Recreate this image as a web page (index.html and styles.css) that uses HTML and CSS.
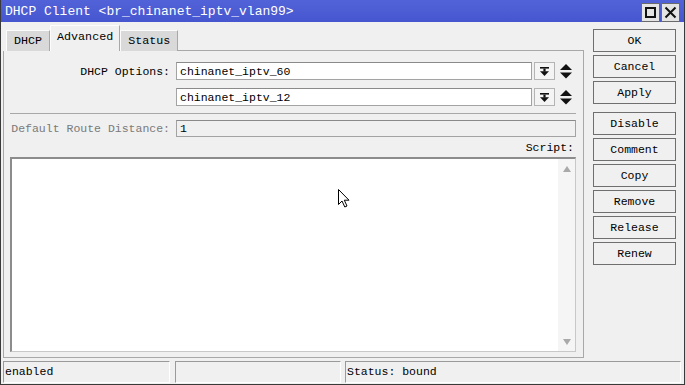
FILE: index.html
```html
<!DOCTYPE html>
<html>
<head>
    <title>DHCP Client</title>
    <link rel="stylesheet" href="styles.css">
</head>
<body>
    <div class="window">
        <div class="titlebar">
            <span class="title">DHCP Client &lt;br_chinanet_iptv_vlan99&gt;</span>
            <div class="win-buttons">
                <span class="wbtn"><span class="max-box"></span></span>
                <span class="wbtn">
                    <svg width="13" height="13" viewBox="0 0 13 13"><path d="M1.5 1.5 L11.5 11.5 M11.5 1.5 L1.5 11.5" stroke="#111" stroke-width="2"/></svg>
                </span>
            </div>
        </div>

        <div class="main">
            <div class="left-col">
                <div class="tabs">
                    <div class="tab">DHCP</div>
                    <div class="tab active">Advanced</div>
                    <div class="tab">Status</div>
                    <div class="tab-fill"></div>
                </div>
                <div class="panel">
                    <div class="row first">
                        <label class="field-label">DHCP Options:</label>
                        <div class="field">
                            <div class="input">chinanet_iptv_60</div>
                            <span class="drop-btn">
                                <svg width="9" height="9" viewBox="0 0 9 9"><rect x="0" y="0" width="9" height="1.6" fill="#111"/><rect x="3.4" y="1.6" width="2.2" height="3" fill="#111"/><polygon points="0,4.3 9,4.3 4.5,9" fill="#111"/></svg>
                            </span>
                            <span class="updown">
                                <svg width="12" height="15" viewBox="0 0 12 15"><polygon points="6,0 12,6 0,6" fill="#111"/><polygon points="0,8.5 12,8.5 6,14.5" fill="#111"/></svg>
                            </span>
                        </div>
                    </div>
                    <div class="row">
                        <label class="field-label"></label>
                        <div class="field">
                            <div class="input">chinanet_iptv_12</div>
                            <span class="drop-btn">
                                <svg width="9" height="9" viewBox="0 0 9 9"><rect x="0" y="0" width="9" height="1.6" fill="#111"/><rect x="3.4" y="1.6" width="2.2" height="3" fill="#111"/><polygon points="0,4.3 9,4.3 4.5,9" fill="#111"/></svg>
                            </span>
                            <span class="updown">
                                <svg width="12" height="15" viewBox="0 0 12 15"><polygon points="6,0 12,6 0,6" fill="#111"/><polygon points="0,8.5 12,8.5 6,14.5" fill="#111"/></svg>
                            </span>
                        </div>
                    </div>

                    <div class="separator"></div>

                    <div class="row disabled">
                        <label class="field-label">Default Route Distance:</label>
                        <div class="field">
                            <div class="input">1</div>
                        </div>
                    </div>

                    <div class="script-label">Script:</div>
                    <div class="script-box">
                        <div class="script-text"></div>
                        <div class="scrollbar">
                            <span class="arrow-up"></span>
                            <span class="arrow-down"></span>
                        </div>
                    </div>
                </div>
            </div>

            <div class="buttons">
                <button class="btn">OK</button>
                <button class="btn">Cancel</button>
                <button class="btn">Apply</button>
                <button class="btn group">Disable</button>
                <button class="btn">Comment</button>
                <button class="btn">Copy</button>
                <button class="btn">Remove</button>
                <button class="btn">Release</button>
                <button class="btn">Renew</button>
            </div>
        </div>

        <div class="statusbar">
            <div class="cell first">enabled</div>
            <div class="cell second"></div>
            <div class="cell third">Status: bound</div>
        </div>

        <!-- mouse pointer over the script box -->
        <svg class="cursor" width="13" height="19" viewBox="0 0 13 19">
            <path d="M0.5 0.5 L0.5 15.5 L4 12 L6.8 18 L9 17 L6.3 11.2 L11 11.2 Z" fill="#fff" stroke="#000" stroke-width="1"/>
        </svg>
    </div>
</body>
</html>
```

FILE: styles.css
```css
body {
    margin: 0;
    font-family: "Liberation Mono", "DejaVu Sans Mono", monospace;
    font-size: 11.5px;
    color: #000;
}

.window {
    position: relative;
    width: 685px;
    height: 385px;
    box-sizing: border-box;
    border: 1px solid #3a3a3a;
    border-top: none;
    background-color: #f0f0f0;
    display: flex;
    flex-direction: column;
}

.titlebar {
    height: 22px;
    background: linear-gradient(#5262d8, #4656cf);
    color: #fff;
    display: flex;
    align-items: center;
    justify-content: space-between;
    padding-left: 4px;
    padding-right: 4px;
    flex-shrink: 0;
}

.title {
    font-size: 13px;
    white-space: pre;
}

.win-buttons {
    display: flex;
    gap: 1px;
    margin-top: 2px;
}

.wbtn {
    width: 17px;
    height: 17px;
    background-color: #e4e4e4;
    border: 1px solid #6a6a6a;
    display: flex;
    align-items: center;
    justify-content: center;
}

.max-box {
    width: 11px;
    height: 11px;
    box-sizing: border-box;
    border: 2px solid #111;
}

.main {
    flex: 1;
    display: flex;
    min-height: 0;
}

.left-col {
    width: 583px;
    padding-left: 2px;
    padding-top: 3px;
    display: flex;
    flex-direction: column;
    box-sizing: border-box;
}

.tabs {
    height: 26px;
    display: flex;
    align-items: flex-end;
    padding-left: 3px;
    flex-shrink: 0;
}

.tab {
    height: 20px;
    line-height: 20px;
    padding: 0 7px;
    background-color: #d9d9d9;
    border-top: 1px solid #fcfcfc;
    border-left: 1px solid #fcfcfc;
    border-right: 1px solid #a8a8a8;
    font-size: 11.7px;
}

.tab.active {
    height: 25px;
    line-height: 23px;
    background-color: #f0f0f0;
    padding: 0 6px;
}

.tab-fill {
    flex: 1;
    align-self: stretch;
    border-bottom: 1px solid #a8a8a8;
}

.panel {
    flex: 1;
    border: 1px solid #a8a8a8;
    border-top: none;
    padding: 0 7px 5px 6px;
    display: flex;
    flex-direction: column;
}

.row {
    display: flex;
    align-items: center;
    margin-top: 8px;
}

.row.first {
    margin-top: 11px;
}

.field-label {
    width: 160px;
    text-align: right;
    margin-right: 6px;
    white-space: pre;
}

.field {
    flex: 1;
    display: flex;
    align-items: center;
}

.input {
    flex: 1;
    height: 18px;
    line-height: 18px;
    box-sizing: border-box;
    border: 1px solid #a3a3a3;
    border-top-color: #8a8a8a;
    background-color: #fff;
    padding-left: 3px;
}

.drop-btn {
    width: 21px;
    height: 18px;
    box-sizing: border-box;
    margin-left: 2px;
    border: 1px solid #b4b4b4;
    background-color: #f4f4f4;
    display: flex;
    align-items: center;
    justify-content: center;
}

.updown {
    width: 12px;
    margin-left: 5px;
    margin-right: 4px;
    display: flex;
    align-items: center;
}

.separator {
    margin-top: 7px;
    height: 1px;
    background-color: #a8a8a8;
}

.row.disabled {
    margin-top: 6px;
    color: #7a7a7a;
}

.row.disabled .input {
    height: 17px;
    line-height: 16px;
    background-color: #f0f0f0;
    color: #000;
}

.script-label {
    height: 20px;
    line-height: 22px;
    text-align: right;
    padding-right: 2px;
}

.script-box {
    flex: 1;
    display: flex;
    background-color: #fff;
    border: 1px solid #c8c8c8;
    border-top: 2px solid #8c8c8c;
    border-left: 2px solid #8c8c8c;
}

.script-text {
    flex: 1;
}

.scrollbar {
    width: 17px;
    background-color: #f5f5f5;
    display: flex;
    flex-direction: column;
    justify-content: space-between;
    align-items: center;
    padding: 7px 0 6px;
}

.arrow-up {
    width: 0;
    height: 0;
    border-left: 4px solid transparent;
    border-right: 4px solid transparent;
    border-bottom: 6px solid #a9a9a9;
}

.arrow-down {
    width: 0;
    height: 0;
    border-left: 4px solid transparent;
    border-right: 4px solid transparent;
    border-top: 6px solid #a9a9a9;
}

.buttons {
    margin-left: 9px;
    padding-top: 7px;
    display: flex;
    flex-direction: column;
    gap: 3px;
}

.btn {
    width: 83px;
    height: 23px;
    padding: 0;
    font-family: "Liberation Mono", "DejaVu Sans Mono", monospace;
    font-size: 11.5px;
    color: #000;
    background-color: #f0f0f0;
    border: 1px solid #6f6f6f;
    border-radius: 0;
}

.btn.group {
    margin-top: 5px;
}

.statusbar {
    height: 22px;
    margin-top: 3px;
    margin-bottom: 1px;
    padding-left: 2px;
    padding-right: 3px;
    display: flex;
    flex-shrink: 0;
}

.cell {
    box-sizing: border-box;
    border-top: 1px solid #9a9a9a;
    border-left: 1px solid #9a9a9a;
    border-right: 1px solid #fff;
    border-bottom: 1px solid #fff;
    line-height: 20px;
    padding-left: 1px;
}

.cell.first {
    width: 167px;
}

.cell.second {
    width: 166px;
    margin-left: 5px;
}

.cell.third {
    flex: 1;
    margin-left: 4px;
}

.cursor {
    position: absolute;
    left: 337px;
    top: 189px;
}
```
